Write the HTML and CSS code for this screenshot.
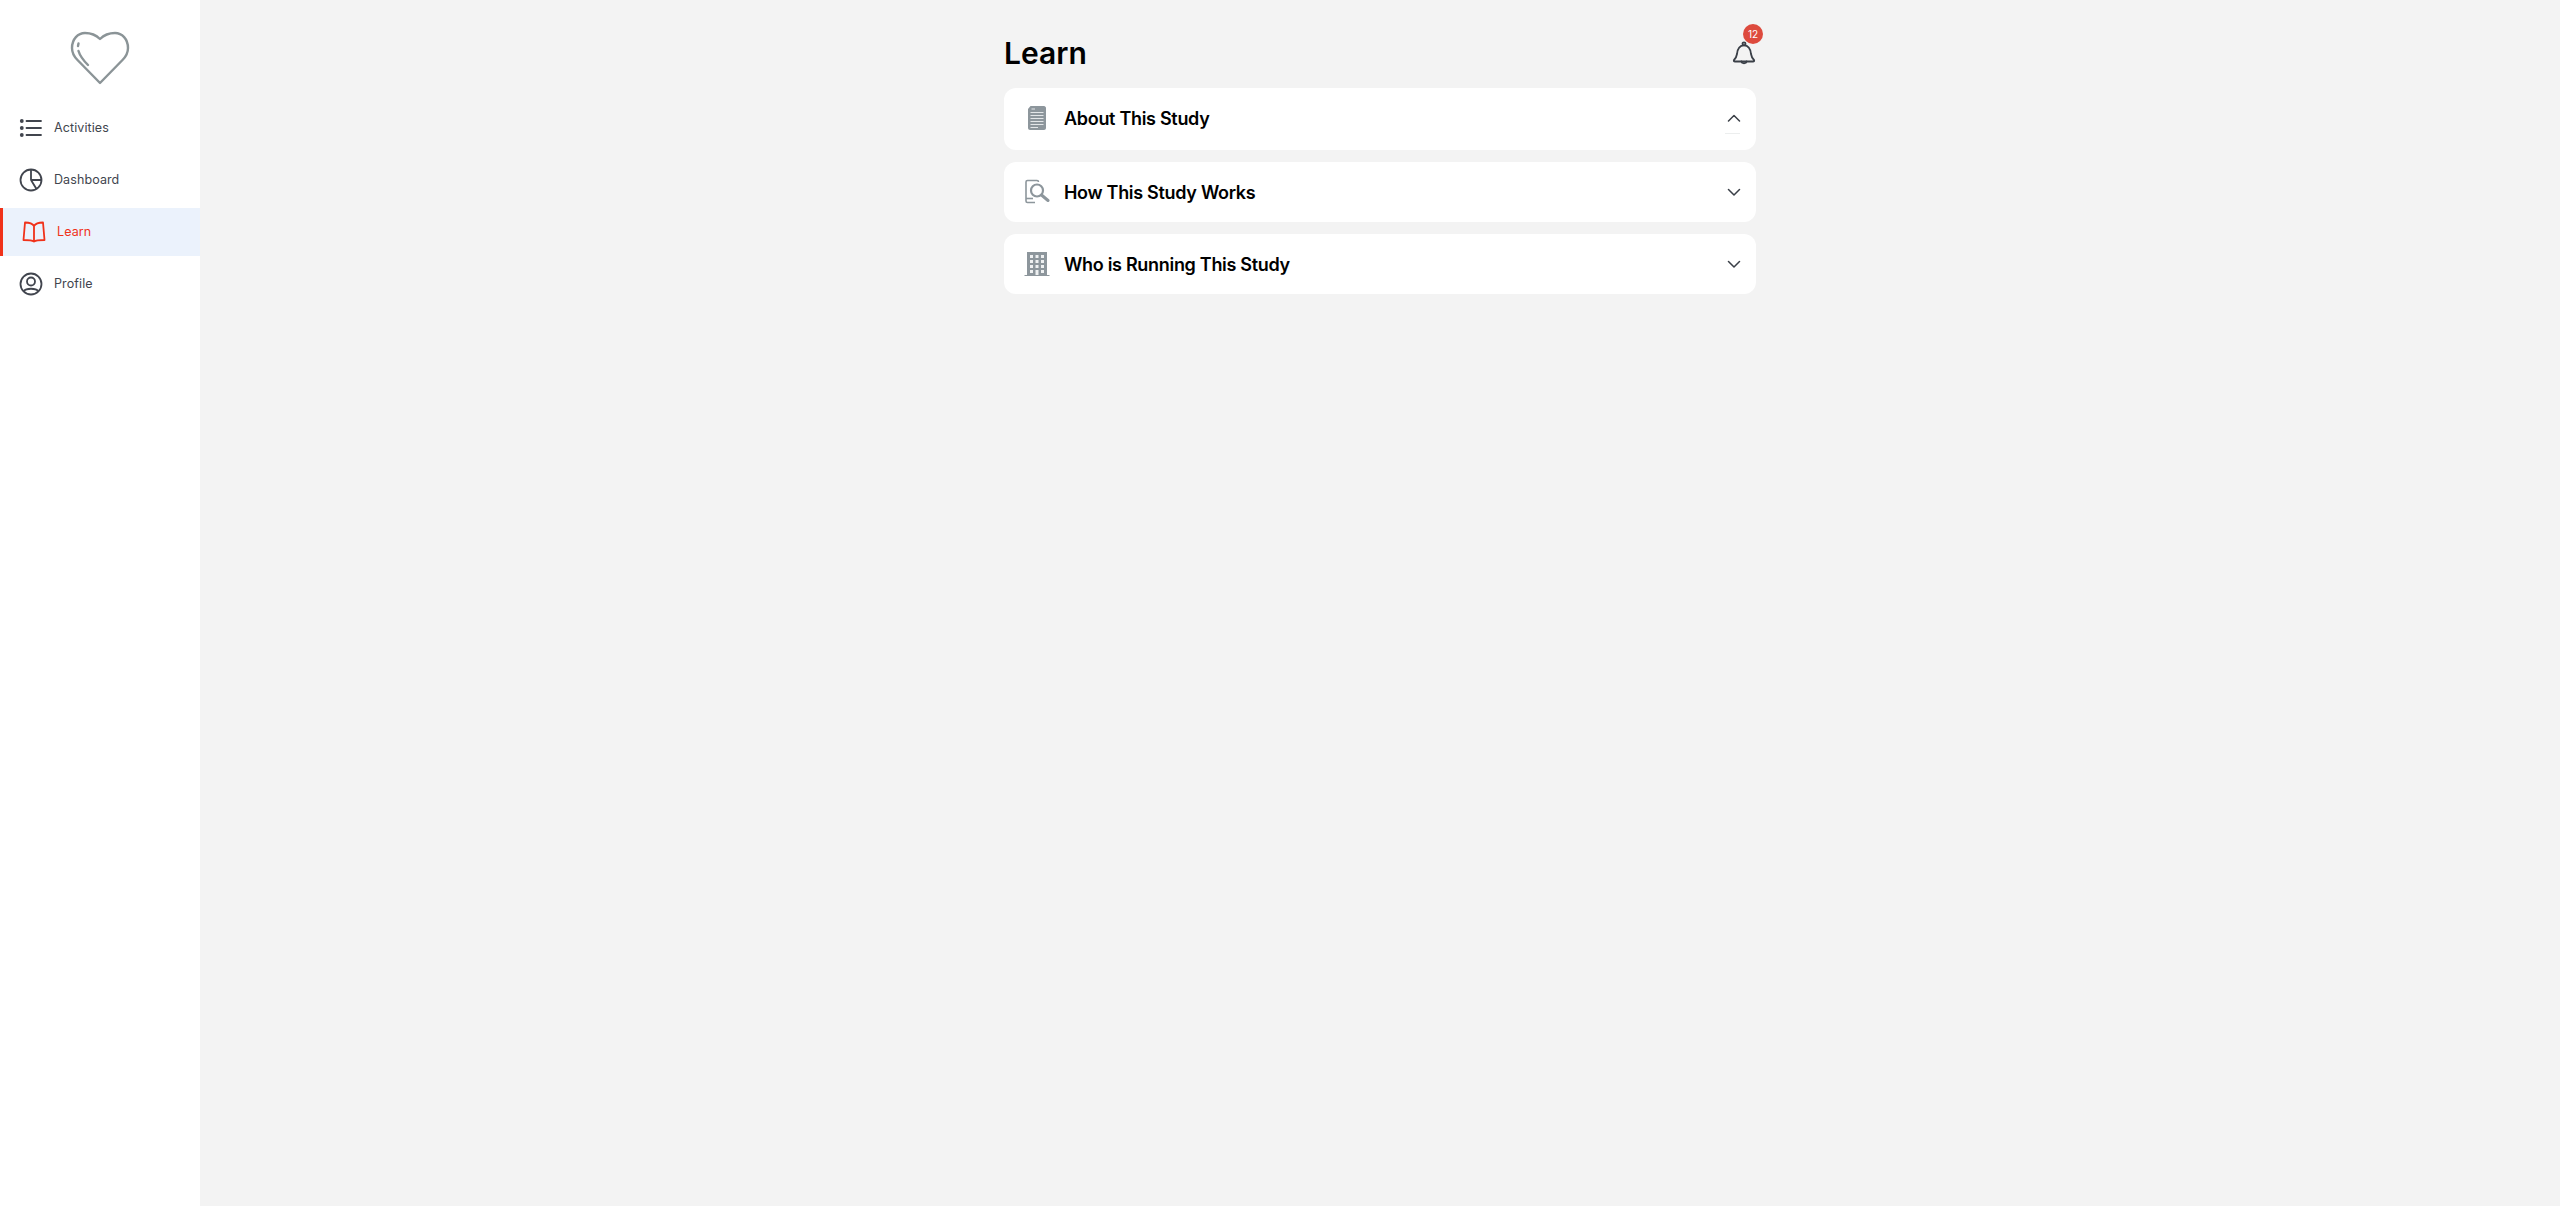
FILE: index.html
```html
<!DOCTYPE html>
<html lang="en">
<head>
    <meta charset="UTF-8">
    <title>Learn</title>
    <link rel="stylesheet" href="styles.css">
</head>
<body>
    <aside class="sidebar">
        <div class="logo">
            <svg width="60" height="54" viewBox="0 0 60 54" fill="none" stroke="#8b9497" stroke-width="2.4" stroke-linecap="round" stroke-linejoin="round">
                <path d="M30 52L7.500 29C3.500 25 2 21 2 17C2 8 8 2 15 2C21 2 26 4 30 8C34 4 39 2 45 2C52 2 58 8 58 17C58 21 56.500 25 52.500 29Z"/>
                <path d="M8.500 12.500L8 15"/>
                <path d="M8.500 20C10 25 13 29 18 34"/>
            </svg>
        </div>
        <nav class="nav">
            <a class="nav-item" href="#">
                <svg class="nav-icon" viewBox="0 0 24 24" fill="none" stroke="currentColor" stroke-width="1.800" stroke-linecap="round">
                    <path d="M7.500 5H22M7.500 12H22M7.500 19H22"/>
                    <circle cx="2.800" cy="5" r="1.900" fill="currentColor" stroke="none"/>
                    <circle cx="2.800" cy="12" r="1.900" fill="currentColor" stroke="none"/>
                    <circle cx="2.800" cy="19" r="1.900" fill="currentColor" stroke="none"/>
                </svg>
                <span>Activities</span>
            </a>
            <a class="nav-item" href="#">
                <svg class="nav-icon" viewBox="0 0 24 24" fill="none" stroke="currentColor" stroke-width="1.800" stroke-linejoin="round">
                    <circle cx="12" cy="12" r="10.500"/>
                    <path d="M12 1.500V12H22.500M12 12L17.500 21"/>
                </svg>
                <span>Dashboard</span>
            </a>
            <a class="nav-item active" href="#">
                <svg class="nav-icon" viewBox="0 0 24 24" fill="none" stroke="currentColor" stroke-width="1.800" stroke-linejoin="round" stroke-linecap="round">
                    <path d="M12 6C10.500 3.500 8 2.500 3 2.500L1.500 20C7 20 10 20 12 21.500C14 20 17 20 22.500 20L21 2.500C16 2.500 13.500 3.500 12 6ZM12 6V21.500"/>
                </svg>
                <span>Learn</span>
            </a>
            <a class="nav-item" href="#">
                <svg class="nav-icon" viewBox="0 0 24 24" fill="none" stroke="currentColor" stroke-width="1.800" stroke-linecap="round">
                    <circle cx="12" cy="12" r="10.500"/>
                    <circle cx="12" cy="9.500" r="4"/>
                    <path d="M5 19C7 16 17 16 19 19"/>
                </svg>
                <span>Profile</span>
            </a>
        </nav>
    </aside>

    <main class="main">
        <div class="content">
            <header class="page-head">
                <h1>Learn</h1>
                <div class="bell">
                    <svg width="24" height="24" viewBox="0 0 24 24" fill="none" stroke="#3a3f47" stroke-width="1.800" stroke-linejoin="round" stroke-linecap="round">
                        <circle cx="12" cy="2.800" r="1.500"/>
                        <path d="M2 19C3.500 17.500 4.500 16 5 13C5.500 8 7.500 4.300 12 4.300C16.500 4.300 18.500 8 19 13C19.500 16 20.500 17.500 22 19C22.500 20 22 20.500 21 20.500H3C2 20.500 1.500 20 2 19Z"/>
                        <path d="M9.500 20.500C9.800 22.800 14.200 22.800 14.500 20.500"/>
                    </svg>
                    <span class="badge">12</span>
                </div>
            </header>

            <section class="card card-first">
                <svg class="card-icon" viewBox="0 0 26 26">
                    <path d="M6.500 1H20C21 1 22 2 22 3V23C22 24 21 25 20 25H6C5 25 4 24 4 23V4Z" fill="#8d969c"/>
                    <path d="M7.500 4H11M6.500 7.500H19.500M6.500 10.500H19.500M6.500 13.500H19.500M6.500 16.500H19.500M6.500 19.500H19.500M6.500 22.500H14" stroke="#e3e6e8" stroke-width="1.200"/>
                </svg>
                <h2>About This Study</h2>
                <svg class="chevron" viewBox="0 0 14 8" fill="none" stroke="#3a3f47" stroke-width="1.500" stroke-linecap="round" stroke-linejoin="round">
                    <path d="M1.500 7L7 1.500L12.500 7"/>
                </svg>
                <span class="card-mark"></span>
            </section>

            <section class="card">
                <svg class="card-icon" viewBox="0 0 26 26" fill="none" stroke="#8d969c">
                    <path d="M11 23.500H3.500C2.500 23.500 2 23 2 22V3C2 2 2.500 1.500 3.500 1.500H13C14 1.500 14.500 2 14.500 3" stroke-width="1.600"/>
                    <path d="M2 19.500H9" stroke-width="1.600"/>
                    <circle cx="13" cy="11.500" r="6" stroke-width="2.200"/>
                    <path d="M17.500 16L24 21.500" stroke-width="3" stroke-linecap="round"/>
                </svg>
                <h2>How This Study Works</h2>
                <svg class="chevron" viewBox="0 0 14 8" fill="none" stroke="#3a3f47" stroke-width="1.500" stroke-linecap="round" stroke-linejoin="round">
                    <path d="M1.500 1.500L7 7L12.500 1.500"/>
                </svg>
            </section>

            <section class="card">
                <svg class="card-icon" viewBox="0 0 26 26">
                    <rect x="3" y="1" width="20" height="23" fill="#8d969c"/>
                    <path d="M0.500 24.500H25.500" stroke="#8d969c" stroke-width="1"/>
                    <g fill="#eef0f1">
                        <rect x="6" y="4" width="3" height="3"/><rect x="11.500" y="4" width="3" height="3"/><rect x="17" y="4" width="3" height="3"/>
                        <rect x="6" y="9" width="3" height="3"/><rect x="11.500" y="9" width="3" height="3"/><rect x="17" y="9" width="3" height="3"/>
                        <rect x="6" y="14" width="3" height="3"/><rect x="11.500" y="14" width="3" height="3"/><rect x="17" y="14" width="3" height="3"/>
                        <rect x="6" y="19" width="3" height="3"/><rect x="11.500" y="19" width="3" height="5"/><rect x="17" y="19" width="3" height="3"/>
                    </g>
                </svg>
                <h2>Who is Running This Study</h2>
                <svg class="chevron" viewBox="0 0 14 8" fill="none" stroke="#3a3f47" stroke-width="1.500" stroke-linecap="round" stroke-linejoin="round">
                    <path d="M1.500 1.500L7 7L12.500 1.500"/>
                </svg>
            </section>
        </div>
    </main>
</body>
</html>
```

FILE: styles.css
```css
:root {
    --bg-color: #f3f3f3;
    --text-color: #000;
    --nav-color: #41454e;
    --active-color: #f0321a;
    --active-bg: #ebf2fc;
}

* {
    box-sizing: border-box;
}

html, body {
    height: 100%;
}

body {
    margin: 0;
    display: flex;
    min-height: 1206px;
    font-family: Inter, 'Liberation Sans', sans-serif;
    background-color: var(--bg-color);
    color: var(--text-color);
}

.sidebar {
    flex: 0 0 200px;
    background-color: #fff;
}

.logo {
    display: flex;
    justify-content: center;
    padding-top: 31px;
    height: 104px;
}

.nav {
    display: flex;
    flex-direction: column;
    gap: 4px;
}

.nav-item {
    display: flex;
    align-items: center;
    gap: 11px;
    height: 48px;
    padding-left: 19px;
    padding-bottom: 1px;
    color: var(--nav-color);
    font-size: 12.5px;
    letter-spacing: 0.1px;
    text-decoration: none;
}

.nav-item.active {
    border-left: 3px solid var(--active-color);
    background-color: var(--active-bg);
    color: var(--active-color);
}

.nav-icon {
    width: 24px;
    height: 24px;
    flex: none;
}

.main {
    flex: 1;
    display: flex;
    justify-content: center;
}

.content {
    width: 752px;
}

.page-head {
    display: flex;
    align-items: center;
    justify-content: space-between;
    height: 88px;
    padding-top: 18px;
}

h1 {
    margin: 0;
    font-size: 30px;
    font-weight: 600;
}

.bell {
    position: relative;
    width: 24px;
    height: 24px;
    margin-top: -1px;
}

.badge {
    position: absolute;
    top: -17px;
    left: 11px;
    width: 20px;
    height: 20px;
    border-radius: 50%;
    background-color: #dd4a3d;
    color: #fff;
    font-size: 10px;
    line-height: 20px;
    text-align: center;
}

.card {
    position: relative;
    display: flex;
    align-items: center;
    height: 60px;
    margin-bottom: 12px;
    padding: 0 15px 0 20px;
    border-radius: 12px;
    background-color: #fff;
}

.card-first {
    height: 62px;
    padding-bottom: 2px;
}

.card-icon {
    flex: none;
    width: 26px;
    height: 26px;
    margin-right: 14px;
}

h2 {
    flex: 1;
    margin: 0;
    font-size: 18px;
    font-weight: 600;
    letter-spacing: -0.3px;
}

.chevron {
    flex: none;
    width: 14px;
    height: 8px;
}

.card-mark {
    position: absolute;
    top: 45px;
    right: 16px;
    width: 15px;
    height: 1px;
    background-color: #eceeee;
}
```
